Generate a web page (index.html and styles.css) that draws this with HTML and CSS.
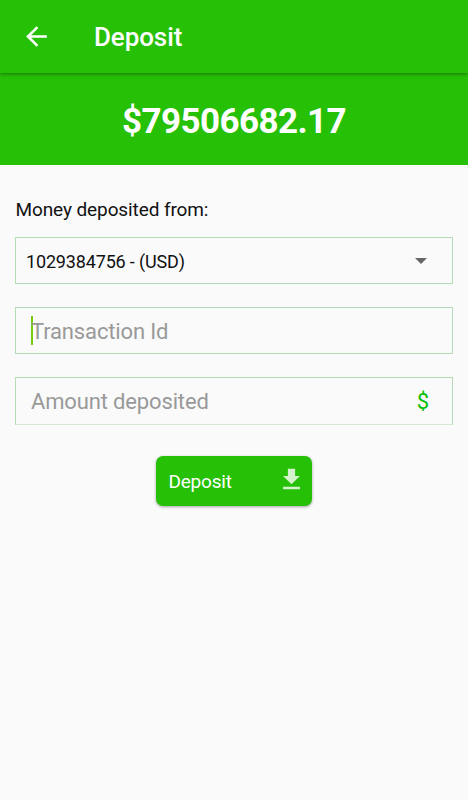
FILE: index.html
```html
<!DOCTYPE html>
<html lang="en">
<head>
<meta charset="utf-8">
<title>Deposit</title>
<link rel="stylesheet" href="styles.css">
</head>
<body>
<header class="appbar">
  <svg class="back" viewBox="0 0 24 24"><path d="M20 11H7.83l5.59-5.59L12 4l-8 8 8 8 1.41-1.41L7.83 13H20v-2z"/></svg>
  <h1 class="title">Deposit</h1>
</header>
<section class="balance"><span class="amount">$79506682.17</span></section>
<main class="form">
  <div class="label"><span class="label-text">Money deposited from:</span></div>
  <div class="field select"><span class="select-text">1029384756 - (USD)</span><svg class="arrow" viewBox="0 0 12 6"><path d="M0 0h12L6 6z"/></svg></div>
  <div class="field"><span class="caret"></span><span class="hint hint-id">Transaction Id</span></div>
  <div class="field last"><span class="hint hint-amount">Amount deposited</span><span class="dollar">$</span></div>
  <button class="button"><span class="button-text">Deposit</span><svg class="download" viewBox="0 0 24 24"><path d="M19 9h-4V3H9v6H5l7 7 7-7zM5 18v2h14v-2H5z"/></svg></button>
</main>
</body>
</html>
```
FILE: styles.css
```css
* { box-sizing: border-box; }
body { margin: 0; height: 800px; background: #fafafa; font-family: Roboto, sans-serif; color: #111; overflow: hidden; }
.appbar { position: relative; height: 73px; background: #26c006; display: flex; align-items: center; padding-left: 21px; box-shadow: 0 1px 4px rgba(0,0,0,.4); }
.back { width: 31px; height: 31px; fill: #fff; }
.title { margin: 1px 0 0 42px; font-size: 26px; font-weight: 500; line-height: 32px; letter-spacing: -.1px; color: #fff; }
.balance { height: 92px; background: #26c006; display: flex; align-items: center; justify-content: center; padding-top: 5px; }
.amount { font-size: 35px; font-weight: 700; line-height: 42px; letter-spacing: -.57px; color: #fff; }
.form { padding: 33px 15px 0; display: flex; flex-direction: column; }
.label { height: 24px; line-height: 24px; padding-left: .5px; font-size: 19px; letter-spacing: -.1px; margin-bottom: 15px; }
.field { height: 47px; margin-bottom: 23px; border: 1px solid #b5dcb5; display: flex; align-items: center; padding: 2px 23px 0 15px; font-size: 22px; letter-spacing: -.15px; }
.select { padding: 1px 25px 0 10px; font-size: 18px; letter-spacing: -.16px; justify-content: space-between; }
.last { height: 48px; padding-top: 0; border-bottom-color: #d3ebd3; }
.arrow { width: 12px; height: 6px; fill: #666; }
.caret { width: 2px; height: 29px; margin: -2px -2px 0 0; background: #77cc11; }
.hint { color: #999; }
.dollar { margin-left: auto; color: #08c006; }
.button { align-self: center; width: 156px; height: 50px; margin-top: 7.5px; border: 0; border-radius: 7px; background: #26c006; color: #fff; font: 19px Roboto, sans-serif; letter-spacing: -.2px; display: flex; align-items: center; justify-content: space-between; padding: 0 6px 0 12px; box-shadow: 0 1px 3px rgba(0,0,0,.35); }
.button-text { padding: 1px 0 0 .4px; }
.download { width: 29px; height: 29px; margin-bottom: 2px; fill: #d4f2cd; }
```
